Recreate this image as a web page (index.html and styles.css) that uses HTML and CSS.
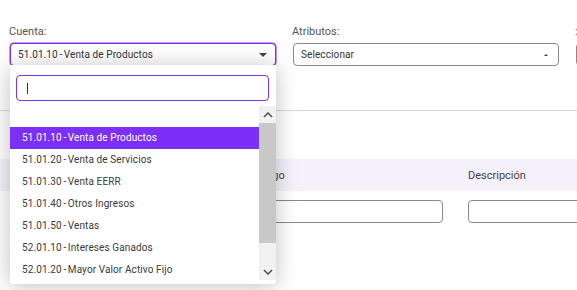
FILE: index.html
```html
<!DOCTYPE html>
<html lang="es">
<head>
<meta charset="utf-8">
<link rel="stylesheet" href="styles.css">
</head>
<body>
<div class="page">
  <div class="filters">
    <div class="field">
      <label class="label">Cuenta:</label>
      <div class="select open">
        <span>51.01.10<span class="sep"> - </span>Venta de Productos</span>
        <span class="caret"></span>
      </div>
    </div>
    <div class="field">
      <label class="label">Atributos:</label>
      <div class="select">
        <span>Seleccionar</span>
        <span class="caret small"></span>
      </div>
    </div>
    <div class="field third">
      <label class="label">:</label>
      <div class="select"></div>
    </div>
  </div>
  <div class="divider"></div>
  <div class="table">
    <div class="thead">
      <div class="th">Código</div>
      <div class="th">Descripción</div>
    </div>
    <div class="trow">
      <div class="td"><div class="input"></div></div>
      <div class="td"><div class="input"></div></div>
    </div>
  </div>

  <div class="dropdown">
    <div class="search"><span class="cursor"></span></div>
    <div class="list-wrap">
      <ul class="list">
        <li class="spacer"></li>
        <li class="item active">51.01.10<span class="sep"> - </span>Venta de Productos</li>
        <li class="item">51.01.20<span class="sep"> - </span>Venta de Servicios</li>
        <li class="item">51.01.30<span class="sep"> - </span>Venta EERR</li>
        <li class="item">51.01.40<span class="sep"> - </span>Otros Ingresos</li>
        <li class="item">51.01.50<span class="sep"> - </span>Ventas</li>
        <li class="item">52.01.10<span class="sep"> - </span>Intereses Ganados</li>
        <li class="item">52.01.20<span class="sep"> - </span>Mayor Valor Activo Fijo</li>
      </ul>
      <div class="scrollbar">
        <div class="arrow">
          <svg width="10" height="6" viewBox="0 0 10 6"><path d="M1 5 L5 1 L9 5" fill="none" stroke="#555" stroke-width="1.6"/></svg>
        </div>
        <div class="thumb"></div>
        <div class="track"></div>
        <div class="arrow">
          <svg width="10" height="6" viewBox="0 0 10 6"><path d="M1 1 L5 5 L9 1" fill="none" stroke="#555" stroke-width="1.6"/></svg>
        </div>
      </div>
    </div>
  </div>
</div>
</body>
</html>
```

FILE: styles.css
```css
* { box-sizing: border-box; }
html, body { margin: 0; padding: 0; background: #fff; }
body {
  font-family: Roboto, "Noto Sans", sans-serif;
  color: #444;
  width: 577px;
  height: 290px;
  overflow: hidden;
}
.page { position: relative; width: 577px; height: 290px; overflow: hidden; }

.filters {
  display: flex;
  gap: 17px;
  padding: 26px 0 0 10px;
}
.field { width: 266px; flex: none; display: flex; flex-direction: column; gap: 6px; }
.field.third { width: 40px; }
.label { font-size: 11px; color: #555; line-height: 11px; margin-left: -1px; }
.select {
  height: 23px;
  border: 1px solid #8a8a8a;
  border-radius: 4px;
  display: flex;
  align-items: center;
  justify-content: space-between;
  padding: 0 7px 0 7px;
  font-size: 10px;
  color: #333;
  background: #fff;
  letter-spacing: 0.1px;
}
.sep { word-spacing: -1px; }
.select.open { border-color: #7b2ff7; box-shadow: 0 0 0 0.5px #7b2ff7; }
.caret {
  width: 0; height: 0;
  border-left: 4px solid transparent;
  border-right: 4px solid transparent;
  border-top: 4px solid #444;
  margin-right: 1px;
}
.caret.small {
  border-left-width: 2px;
  border-right-width: 2px;
  border-top: none;
  border-bottom: 2px solid #444;
  margin-right: 3px;
}

.divider { height: 1px; background: #d8d8d8; margin-top: 44px; }

.table { margin-top: 48px; }
.thead {
  display: grid;
  grid-template-columns: 468px 1fr;
  height: 32px;
  background: #f4f1fb;
  align-items: center;
  font-size: 11px;
  color: #444;
}
.th:first-child { padding-left: 250px; }
.trow {
  display: grid;
  grid-template-columns: 468px 1fr;
  margin-top: 9px;
}
.input {
  height: 23px;
  border: 1px solid #8a8a8a;
  border-radius: 4px;
  background: #fff;
}
.td:first-child .input { width: 200px; margin-left: 243px; }
.td:last-child .input { width: 120px; }

.dropdown {
  position: absolute;
  left: 10px;
  top: 65px;
  width: 266px;
  height: 219px;
  background: #fff;
  box-shadow: 0 2px 22px rgba(0,0,0,0.25);
  border-radius: 0 0 3px 3px;
  display: flex;
  flex-direction: column;
}
.search {
  margin: 10px 7px 0 6px;
  height: 26px;
  border: 1.5px solid #7b2ff7;
  border-radius: 4px;
  display: flex;
  align-items: center;
  padding-left: 10px;
}
.cursor { width: 1px; height: 11px; background: #333; }
.list-wrap {
  margin-top: 5px;
  display: flex;
  height: 174px;
}
.list {
  list-style: none;
  margin: 0;
  padding: 0;
  flex: 1;
  overflow: hidden;
}
.spacer { height: 21px; }
.item {
  height: 22px;
  line-height: 22px;
  padding-left: 12px;
  font-size: 10px;
  color: #3a3a3a;
  white-space: nowrap;
  letter-spacing: 0.1px;
}
.item.active { background: #7b2ff7; color: #fff; }
.scrollbar {
  width: 17px;
  flex: none;
  background: #f1f1f1;
  display: flex;
  flex-direction: column;
}
.arrow { height: 17px; display: flex; align-items: center; justify-content: center; }
.thumb { height: 120px; background: #c8c8c8; }
.track { flex: 1; }
```
